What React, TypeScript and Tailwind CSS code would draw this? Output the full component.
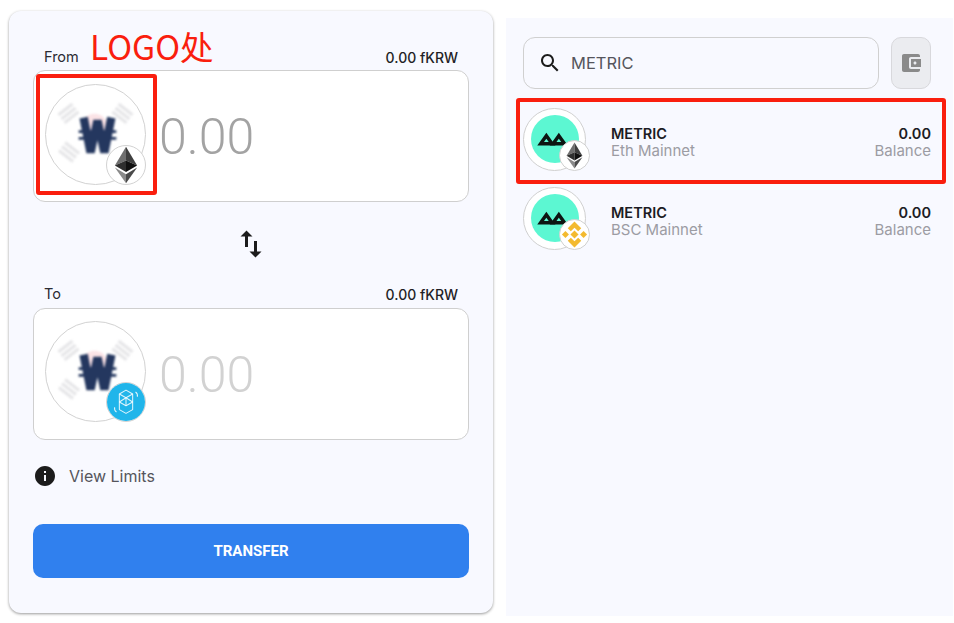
import React from "react";

const Eth = () => (
  <svg viewBox="6 1.5 20 29" className="w-full h-full">
    <polygon points="16,2 16,12.5 7.5,16.3" fill="#6f6f6f" />
    <polygon points="16,2 24.5,16.3 16,12.5" fill="#3f3f3f" />
    <polygon points="16,12.5 7.5,16.3 16,21.3" fill="#2f2f2f" />
    <polygon points="16,12.5 24.5,16.3 16,21.3" fill="#111111" />
    <polygon points="7.5,18 16,23 16,30" fill="#8a8a8a" />
    <polygon points="24.5,18 16,23 16,30" fill="#4a4a4a" />
  </svg>
);

const Bnb = () => (
  <svg viewBox="2 2 28 28" className="w-full h-full">
    <g fill="#f3ba2f">
      <polygon points="16,2.5 23,9.5 19.8,12.7 16,8.9 12.2,12.7 9,9.5" />
      <polygon points="16,29.5 23,22.5 19.8,19.3 16,23.1 12.2,19.3 9,22.5" />
      <polygon points="6.6,12.4 10.2,16 6.6,19.6 3,16" />
      <polygon points="25.4,12.4 29,16 25.4,19.6 21.8,16" />
      <polygon points="16,11.8 20.2,16 16,20.2 11.8,16" />
    </g>
  </svg>
);

const Fantom = () => (
  <svg viewBox="0 0 40 40" className="w-full h-full">
    <circle cx="20" cy="20" r="20" fill="#20b5ea" />
    <g fill="none" stroke="#ffffff" strokeOpacity="0.85" strokeWidth="1.1" strokeLinejoin="round">
      <polygon points="20,7.5 27,11.5 27,28 20,32 13,28 13,11.5" />
      <polyline points="13,11.5 20,15.5 27,11.5" />
      <polyline points="20,15.5 20,24" />
      <polyline points="13,20 20,24 27,20" />
      <polyline points="13,20 20,15.5 27,20" />
      <path d="M30,9.5 a5,5 0 0 1 2,5" />
      <path d="M10,30.5 a5,5 0 0 1 -2,-5" />
    </g>
  </svg>
);

const Won = () => (
  <svg viewBox="0 0 100 100" className="w-full h-full blur-[1.2px]">
    <circle cx="49" cy="42" r="13" fill="#fbe3e6" />
    <g fill="#e6e6e8">
      <g transform="rotate(-38 23 29)">
        <rect x="14" y="22" width="18" height="3.2" />
        <rect x="14" y="27" width="18" height="3.2" />
        <rect x="14" y="32" width="18" height="3.2" />
      </g>
      <g transform="rotate(38 77 29)">
        <rect x="68" y="22" width="18" height="3.2" />
        <rect x="68" y="27" width="18" height="3.2" />
        <rect x="68" y="32" width="18" height="3.2" />
      </g>
      <g transform="rotate(38 23 68)">
        <rect x="14" y="61" width="18" height="3.2" />
        <rect x="14" y="66" width="18" height="3.2" />
        <rect x="14" y="71" width="18" height="3.2" />
      </g>
    </g>
    <g fill="none" stroke="#24375f" strokeLinejoin="bevel">
      <polyline points="38,33 45,68 52,36 59,68 66,33" strokeWidth="8.5" />
      <path d="M33,47 H71 M33,54 H71" strokeWidth="2.8" />
    </g>
  </svg>
);

const Metric = () => (
  <svg viewBox="0 0 50 50" className="w-full h-full">
    <circle cx="25" cy="25" r="25" fill="#5cf7d2" />
    <g fill="none" stroke="#0d1512" strokeWidth="3.6" strokeLinejoin="miter">
      <polygon points="10,30 16,21.5 22,30" />
      <polygon points="23,30 29,21.5 35,30" />
    </g>
  </svg>
);

const Side = ({ label, value }: { label: string; value: string }) => (
  <div className="mb-[4px] flex h-[18px] items-center justify-between pl-[11px] pr-[11px]">
    <span className="text-[14.5px] text-[#2b2b33]">{label}</span>
    <span className="text-[14px] font-medium text-[#1f1f26]">{value}</span>
  </div>
);

const Amount = ({ badge, color, border, pad }: { badge: React.ReactNode; color: string; border: string; pad: string }) => (
  <div className={`flex h-[132px] items-center rounded-[12px] border border-[#cfcfcf] bg-white pl-[11px] ${pad}`}>
    <div className="relative h-[101px] w-[101px] shrink-0 rounded-full border border-[#d2d2d2] bg-white">
      <Won />
      <div className={`absolute bottom-[-1px] right-[-1px] h-[40px] w-[40px] rounded-full bg-white ${border}`}>
        {badge}
      </div>
    </div>
    <span className={`ml-[13px] mt-[6px] font-['Roboto',sans-serif] text-[50px] font-light leading-none ${color}`}>0.00</span>
  </div>
);

const Row = ({ name, net, badge }: { name: string; net: string; badge: React.ReactNode }) => (
  <div className="flex h-[62px] items-center">
    <div className="relative h-[63px] w-[63px] shrink-0 rounded-full border border-[#d0d0d0] bg-white pl-[7px] pt-[6px]">
      <div className="h-[48px] w-[48px]">
        <Metric />
      </div>
      <div className="absolute bottom-[-1px] right-[-5px] h-[31px] w-[31px] rounded-full border border-[#d0d0d0] bg-white p-[1px]">
        {badge}
      </div>
    </div>
    <div className="ml-[25px] flex flex-1 items-center justify-between pt-[5px] leading-[17px]">
      <div className="flex flex-col">
        <span className="text-[14.5px] font-semibold text-[#1c1c24]">{name}</span>
        <span className="text-[15px] text-[#9c9ca3]">{net}</span>
      </div>
      <div className="flex flex-col items-end">
        <span className="text-[14.5px] font-semibold text-[#1c1c24]">0.00</span>
        <span className="text-[15px] text-[#9c9ca3]">Balance</span>
      </div>
    </div>
  </div>
);

export default function App() {
  return (
    <div className="relative flex h-[623px] w-[954px] items-start overflow-hidden bg-white font-['Inter',sans-serif]">
      <div className="ml-[9px] mt-[11px] h-[602px] w-[484px] rounded-[12px] bg-[#f8f9ff] px-[24px] pt-[37px] shadow-[0_1px_3px_rgba(0,0,0,0.4)]">
        <Side label="From" value="0.00 fKRW" />
        <Amount
          color="text-[#a3a3a3]"
          border="border border-[#d2d2d2]"
          badge={<Eth />}
          pad="pb-[4px]"
        />
        <div className="flex h-[83px] items-center justify-center">
          <svg viewBox="0 0 24 24" className="h-[36px] w-[36px] text-[#1c1c1c]" fill="currentColor">
            <path d="M16 17.01V10h-2v7.01h-3L15 21l4-3.99h-3zM9 3L5 6.99h3V14h2V6.99h3L9 3z" />
          </svg>
        </div>
        <div className="pb-[1px]">
          <Side label="To" value="0.00 fKRW" />
        </div>
        <Amount
          color="text-[#d2d2d2]"
          border="border border-[#d2d2d2]"
          badge={<Fantom />}
          pad="pb-[5px]"
        />
        <div className="mt-[24px] flex h-[24px] items-center">
          <svg viewBox="0 0 24 24" className="h-[24px] w-[24px] text-[#1c1c1c]" fill="currentColor">
            <path d="M12 2C6.48 2 2 6.48 2 12s4.48 10 10 10 10-4.48 10-10S17.52 2 12 2zm1 15h-2v-6h2v6zm0-8h-2V7h2v2z" />
          </svg>
          <span className="ml-[12px] text-[16px] text-[#55555c]">View Limits</span>
        </div>
        <button className="mt-[36px] h-[54px] w-full rounded-[10px] bg-[#3080ee] font-['Roboto',sans-serif] text-[15px] font-bold text-white">
          TRANSFER
        </button>
      </div>

      <div className="ml-[13px] mt-[18px] h-[598px] w-[447px] bg-[#f8f9ff] pl-[17px] pr-[22px] pt-[19px]">
        <div className="flex gap-[12px]">
          <div className="flex h-[52px] flex-1 items-center rounded-[12px] border border-[#d0d0d0] pl-[14px]">
            <svg viewBox="0 0 24 24" className="h-[24px] w-[24px] text-[#1c1c1c]" fill="currentColor">
              <path d="M15.5 14h-.79l-.28-.27C15.41 12.59 16 11.11 16 9.5 16 5.91 13.09 3 9.5 3S3 5.91 3 9.5 5.91 16 9.5 16c1.61 0 3.09-.59 4.23-1.57l.27.28v.79l5 4.99L20.49 19l-4.99-5zm-6 0C7.01 14 5 11.99 5 9.5S7.01 5 9.5 5 14 7.01 14 9.5 11.99 14 9.5 14z" />
            </svg>
            <span className="ml-[9px] text-[16.5px] text-[#55555c]">METRIC</span>
          </div>
          <div className="flex h-[52px] w-[40px] items-center justify-center rounded-[10px] border border-[#d8d8dc] bg-[#ebecf0]">
            <svg viewBox="0 0 24 24" className="h-[24px] w-[24px] text-[#8a8a8a]" fill="currentColor">
              <path d="M21 18v1c0 1.1-.9 2-2 2H5c-1.11 0-2-.9-2-2V5c0-1.1.89-2 2-2h14c1.1 0 2 .9 2 2v1h-9c-1.11 0-2 .9-2 2v8c0 1.1.89 2 2 2h9zm-9-2h10V8H12v8zm4-2.5c-.83 0-1.5-.67-1.5-1.5s.67-1.5 1.5-1.5 1.5.67 1.5 1.5-.67 1.5-1.5 1.5z" />
            </svg>
          </div>
        </div>
        <div className="mt-[19px] flex flex-col gap-[17px]">
          <Row name="METRIC" net="Eth Mainnet" badge={<Eth />} />
          <Row name="METRIC" net="BSC Mainnet" badge={<Bnb />} />
        </div>
      </div>

      <span className="absolute left-[90px] top-[26px] font-['Noto_Sans_CJK_SC','Liberation_Sans',sans-serif] text-[33.5px] leading-[40px] text-[#fa1e0e]">LOGO处</span>
      <div className="absolute left-[36px] top-[74px] h-[121px] w-[121px] rounded-[3px] border-[4px] border-[#fa1e0e]" />
      <div className="absolute left-[516px] top-[98px] h-[86px] w-[430px] rounded-[3px] border-[4px] border-[#fa1e0e]" />
    </div>
  );
}
